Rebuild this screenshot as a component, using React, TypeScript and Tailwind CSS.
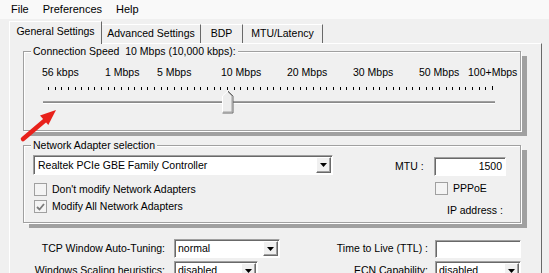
import React from "react";

const FIELD =
  "bg-white border border-[#a0a0a0] border-r-white border-b-white shadow-[inset_1px_1px_0_#696969]";

function DropArrow() {
  return (
    <div className="w-[15px] h-full bg-[#f0f0f0] border border-white border-r-[#696969] border-b-[#696969] shadow-[inset_-1px_-1px_0_#a0a0a0] flex items-center justify-center">
      <svg width="7" height="4" viewBox="0 0 7 4">
        <path d="M0 0h7L3.5 4z" fill="#000" />
      </svg>
    </div>
  );
}

function Select({ value, width }: { value: string; width: string }) {
  return (
    <div className={`${FIELD} ${width} h-[19px] flex items-stretch p-[1px]`}>
      <span className="flex-1 pl-[2px] leading-[15px]">{value}</span>
      <DropArrow />
    </div>
  );
}

function Check({ checked, label }: { checked?: boolean; label: string }) {
  return (
    <div className="flex items-center gap-[5px] h-[15px]">
      <div className="w-[13px] h-[13px] border border-[#a0a0a0] bg-[#f4f4f4] flex items-center justify-center">
        {checked && (
          <svg width="9" height="8" viewBox="0 0 9 8">
            <path d="M1 4l2.5 2.5L8 1" stroke="#7b7b7b" strokeWidth="1.8" fill="none" />
          </svg>
        )}
      </div>
      <span>{label}</span>
    </div>
  );
}

function GroupBox({ label, className, children }: { label: string; className: string; children: React.ReactNode }) {
  return (
    <div
      className={`relative border border-[#a0a0a0] shadow-[1px_1px_0_#fff,6px_5px_0_#a0a0a0,inset_1px_1px_0_#fff] ${className}`}
    >
      <span className="absolute left-[7px] -top-[7px] bg-[#f0f0f0] px-[2px] leading-[13px] whitespace-pre">{label}</span>
      {children}
    </div>
  );
}

const SPEEDS: [string, string][] = [
  ["56 kbps", "w-[63px]"],
  ["1 Mbps", "w-[52px]"],
  ["5 Mbps", "w-[64px]"],
  ["10 Mbps", "w-[66px]"],
  ["20 Mbps", "w-[66px]"],
  ["30 Mbps", "w-[66px]"],
  ["50 Mbps", "w-[49px]"],
  ["100+Mbps", "w-[60px]"],
];

function Slider() {
  const ticks = Array.from({ length: 68 }, (_, i) => 8 + i * (444 / 67));
  return (
    <svg width="460" height="30" viewBox="0 0 460 30" className="ml-[16px] mt-[5px] block">
      {ticks.map((x, i) => (
        <rect key={i} x={Math.round(x)} y={i === 67 ? 2 : 3} width="1" height={i === 67 ? 4 : 3} fill="#000" />
      ))}
      <rect x="3" y="17" width="452" height="1" fill="#a0a0a0" />
      <rect x="3" y="18" width="452" height="1" fill="#8a8a8a" />
      <rect x="3" y="19" width="452" height="1" fill="#fff" />
      <path d="M182.5 12L188 7l5 5v17h-10.5z" fill="#ededed" />
      <path d="M182.5 29V12L188 7" stroke="#fff" fill="none" />
      <path d="M188 7l5 5v17h-10.5" stroke="#696969" fill="none" />
      <path d="M188 8l4 4v16h-9" stroke="#a0a0a0" fill="none" />
    </svg>
  );
}

export default function App() {
  return (
    <div className="relative w-[549px] h-[273px] overflow-hidden bg-[#f0f0f0] text-black text-[10.5px] font-['Liberation_Sans',Arial,sans-serif]">
      <div className="h-[19px] bg-[#f9f9f9] flex items-center pl-[11px] gap-[14px] text-[11px]">
        <span>File</span>
        <span>Preferences</span>
        <span>Help</span>
      </div>

      <div className="h-[24px] flex items-end pl-[9px] relative z-10">
        <div className="w-[93px] h-[23px] -mb-px bg-[#f0f0f0] border-t border-l border-white border-r border-r-[#696969] flex items-center justify-center pb-[2px]">
          General Settings
        </div>
        {[
          ["Advanced Settings", "w-[99px]"],
          ["BDP", "w-[42px]"],
          ["MTU/Latency", "w-[80px]"],
        ].map(([t, w]) => (
          <div
            key={t}
            className={`${w} h-[19px] border-t border-white border-r border-r-[#696969] flex items-center justify-center`}
          >
            {t}
          </div>
        ))}
      </div>

      <div className="ml-[9px] w-[533px] h-[240px] border-t border-l border-white border-r border-r-[#696969] pl-[13px] pt-[7px]">
        <GroupBox label="Connection Speed  10 Mbps (10,000 kbps):" className="w-[498px] h-[80px] pt-[14px]">
          <div className="flex h-[13px] leading-[13px] pl-[18px]">
            {SPEEDS.map(([t, w]) => (
              <span key={t} className={`${w} shrink-0 whitespace-nowrap`}>
                {t}
              </span>
            ))}
          </div>
          <Slider />
        </GroupBox>

        <GroupBox label="Network Adapter selection" className="w-[498px] h-[78px] mt-[14px] flex">
          <div className="w-[311px] pl-[9px] pt-[9px] flex flex-col">
            <div className={`${FIELD} w-[300px] h-[20px] flex items-stretch p-[1px]`}>
              <span className="flex-1 pl-[3px] leading-[16px]">Realtek PCIe GBE Family Controller</span>
              <DropArrow />
            </div>
            <div className="mt-[7px] pl-[1px] flex flex-col gap-[2px]">
              <Check label="Don't modify Network Adapters" />
              <Check checked label="Modify All Network Adapters" />
            </div>
          </div>
          <div className="flex-1 pt-[11px] flex flex-col">
            <div className="flex items-center">
              <span className="ml-[60px] w-[39px]">MTU :</span>
              <div className={`${FIELD} w-[72px] h-[19px] text-right pr-[3px] leading-[16px]`}>1500</div>
            </div>
            <div className="ml-[100px] mt-[5px]">
              <Check label="PPPoE" />
            </div>
            <span className="ml-[112px] mt-[8px] leading-[13px]">IP address :</span>
          </div>
        </GroupBox>

        <div className="mt-[16px] -ml-[13px] flex flex-col gap-[3px]">
          <div className="flex items-center">
            <span className="w-[155px] text-right">TCP Window Auto-Tuning:</span>
            <div className="ml-[9px]">
              <Select value="normal" width="w-[106px]" />
            </div>
            <span className="w-[148px] text-right">Time to Live (TTL) :</span>
            <div className={`${FIELD} ml-[7px] w-[86px] h-[18px]`} />
          </div>
          <div className="flex items-center">
            <span className="w-[155px] text-right">Windows Scaling heuristics:</span>
            <div className="ml-[9px]">
              <Select value="disabled" width="w-[84px]" />
            </div>
            <span className="w-[170px] text-right">ECN Capability:</span>
            <div className="ml-[7px]">
              <Select value="disabled" width="w-[86px]" />
            </div>
          </div>
        </div>
      </div>

      <svg width="70" height="45" viewBox="0 0 70 45" className="absolute left-0 top-[100px] pointer-events-none">
        <path d="M23 39L46 19.5" stroke="#e8211b" strokeWidth="4.5" strokeLinecap="round" />
        <path d="M56 10L48.3 25 40 15.5z" fill="#e8211b" />
      </svg>
    </div>
  );
}
